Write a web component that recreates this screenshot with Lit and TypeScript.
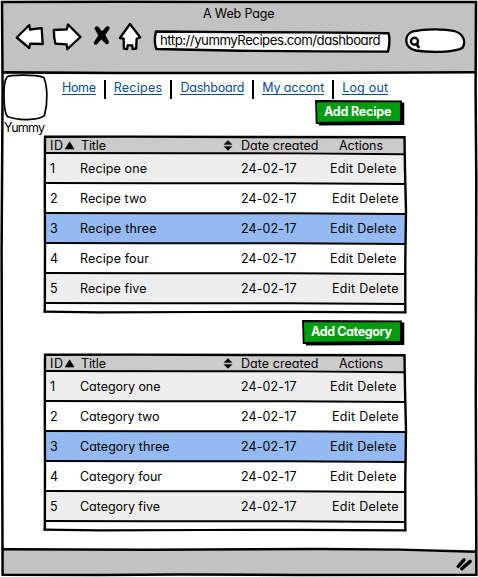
import { LitElement, html, svg, css } from "lit";
import { customElement, property } from "lit/decorators.js";
import { classMap } from "lit/directives/class-map.js";

/** A label whose tracking is computed so that it fills a given width. */
@customElement("sk-text")
class SkText extends LitElement {
  @property() text = "";
  @property({ type: Number }) width = 0;
  static styles = css`
    :host { display: block; white-space: pre; flex: none; }
    .t { display: inline-block; font-feature-settings: "cv11" 1, "calt" 0; }
  `;
  render() {
    return html`<span class="t">${this.text}</span>`;
  }
  updated() {
    const el = this.renderRoot.querySelector<HTMLElement>(".t")!;
    el.style.letterSpacing = "0px";
    const natural = el.getBoundingClientRect().width;
    const n = Math.max(1, this.text.length - 1);
    el.style.letterSpacing = `${((this.width - natural) / n).toFixed(3)}px`;
  }
}

const label = (text: string, width: number) =>
  html`<sk-text .text=${text} .width=${width}></sk-text>`;

interface Row { title: string; width: number; indent: boolean }

@customElement("sk-table")
class SkTable extends LitElement {
  @property({ attribute: false }) rows: Row[] = [];
  static styles = css`
    :host { display: block; position: relative; width: 363px; height: 178px; }
    .body { display: flex; flex-direction: column; padding: 1px 2px 0 1px; }
    .row { display: grid; grid-template-columns: 30px 160px 90px 80px; height: 28px; padding-top: 2px; align-items: center; }
    .head { height: 15px; padding-top: 1px; background: #cbcbcb; }
    .odd { background: #eee; }
    .selected { background: #94baf1; }
    .id { padding-left: 5px; display: flex; align-items: center; }
    .id svg { margin-left: 0; }
    .title { padding-left: 5px; display: flex; align-items: center; }
    .head .title { padding-right: 2px; padding-left: 6px; justify-content: space-between; }
    .date { padding-left: 6px; }
    .act { padding-left: 5px; }
    .act.in { padding-left: 7px; }
    .head .act { padding-left: 14px; }
    .lines { position: absolute; left: -2px; top: -2px; }
  `;
  render() {
    return html`
      <div class="body">
        <div class="row head">
          <div class="id">${label("ID", 13)}
            <svg width="12" height="10" viewBox="0 0 12 10"><path d="M6 .6L10.6 8.2H1.2Z" fill="#000" stroke="#000" stroke-width=".6"/></svg>
          </div>
          <div class="title">${label("Title", 25)}
            <svg width="10" height="12" viewBox="0 0 10 12"><path d="M5 .4L9 4.4H1ZM5 10.4L9 6.4H1Z" fill="#000" stroke="#000" stroke-width=".4"/></svg>
          </div>
          <div class="date">${label("Date created", 77.5)}</div>
          <div class="act">${label("Actions", 44)}</div>
        </div>
        ${this.rows.map((r, i) => html`
          <div class=${classMap({ row: true, odd: i % 2 === 0, selected: i === 2 })}>
            <div class="id">${label(String(i + 1), 8)}</div>
            <div class="title">${label(r.title, r.width)}</div>
            <div class="date">${label("24-02-17", 55.5)}</div>
            <div class=${classMap({ act: true, in: r.indent })}>${label("Edit Delete", 66.5)}</div>
          </div>`)}
      </div>
      <svg class="lines" width="368" height="182" viewBox="42 134 368 182" fill="none" stroke="#000">
        <path stroke-width="2.4" d="M44 136.8L130 136.6L250 137L404.5 137.3L405 170L406 212L405.3 260L405.3 312.5M45 136L44.8 190L45 250L44.8 312.5"/>
        <path stroke-width="2.2" d="M43.5 311.7L100 312.4L200 312L300 311.8L406.5 312.4"/>
        <path stroke-width="1.9" d="M45 153L200 153.2L300 153.4L405 154.2"/>
        ${[183, 213, 243, 273, 303].map((y) => svg`<path stroke-width="2" d="M45 ${y}L150 ${y + 0.2}L290 ${y + 0.2}L405 ${y + 1}"/>`)}
      </svg>`;
  }
}

@customElement("app-root")
class AppRoot extends LitElement {
  static styles = css`
    :host { display: block; position: relative; width: 478px; height: 577px; background: #fff; overflow: hidden;
      font: 400 12.5px/16px Inter, "Liberation Sans", sans-serif; color: #000; }
    *, sk-table { box-sizing: border-box; }
    .bar { height: 73px; background: #c2c2c2; display: flex; flex-direction: column; }
    .name { padding: 6px 0 0 203px; height: 20px; }
    .tools { display: grid; grid-template-columns: 34px 38px 32px 30px 252px 78px; padding-left: 14px; height: 40px; }
    .url { position: relative; padding: 12px 0 0 12px; font-size: 13.2px; }
    .url svg { position: absolute; left: 0; top: 0; }
    .url sk-text { position: relative; }
    .page { height: 477px; display: grid; grid-template-columns: 44px 434px; }
    .brand { padding-top: 1px; display: flex; flex-direction: column; }
    .brand svg { margin-bottom: -1px; flex: none; }
    .brand sk-text { padding-left: 4px; }
    .main { display: flex; flex-direction: column; }
    nav { display: flex; height: 27px; padding: 7px 0 0 18px; color: #0a4d92; }
    nav .link { height: 15px; border-bottom: 1px solid #0a4d92; }
    nav i { width: 2px; height: 19px; background: #000; margin: 0 8px 0 8px; flex: none; }
    .btn { position: relative; height: 26px; padding-top: 4px; color: #fff; font-weight: 650; }
    .btn svg { position: absolute; left: 0; top: 0; }
    .btn sk-text { position: relative; }
    .recipe { width: 90px; margin-left: 271px; padding-left: 9px; }
    .category { width: 104px; margin-left: 258px; padding-left: 9px; margin-top: 6px; }
    .first { margin-top: 10px; }
    .second { margin-top: 8px; }
    .status { height: 27px; background: #c2c2c2; }
    .frame { position: absolute; left: 0; top: 0; }
  `;
  private glyph(x: number, w: number, body: unknown) {
    return html`<svg width=${w} height="40" viewBox="${x} 20 ${w} 40" fill="#fff" stroke="#000" stroke-width="2.3" stroke-linejoin="round" stroke-linecap="round">${body}</svg>`;
  }
  private button(cls: string, w: number, text: string, tw: number) {
    return html`<div class="btn ${cls}">
      <svg width=${w + 5} height="27" viewBox="0 0 ${w + 5} 27">
        <path fill="#000" d="M4 4L${w + 3.3} 2.5L${w + 3.3} 25L4 25.6Z"/>
        <path fill="#009b0e" stroke="#000" stroke-width="1.8" d="M1 1L${w} 1.3L${w} 21.6L1.6 23Z"/>
      </svg>${label(text, tw)}</div>`;
  }
  private nav() {
    const items: [string, number][] = [["Home", 34], ["Recipes", 48.5], ["Dashboard", 64], ["My accont", 62], ["Log out", 46]];
    return items.map(([t, w], i) => html`${i ? html`<i></i>` : ""}<div class="link">${label(t, w)}</div>`);
  }
  private rows(kind: string, widths: number[]): Row[] {
    return ["one", "two", "three", "four", "five"].map((n, i) => ({
      title: `${kind} ${n}`, width: widths[i], indent: i === 1 || i === 4,
    }));
  }
  render() {
    return html`
      <div class="bar">
        <div class="name">${label("A Web Page", 71.5)}</div>
        <div class="tools">
          ${this.glyph(14, 34, svg`<path d="M16.8 37.5L29.3 25L30 29.5L41.7 28.2L42.7 44L30.3 43.6L29.2 48Z"/>`)}
          ${this.glyph(48, 38, svg`<path d="M53.8 30L66.8 29.3L68 24.5L80.5 37L67.3 49.2L66.6 44.3L55.5 43.7L54.3 38Z"/>`)}
          ${this.glyph(86, 32, svg`<path stroke="none" fill="#000" d="M94.3 28.3Q95.5 25.6 98.2 26.6L102 31.2L106.4 26.4Q109.4 25.4 109.8 28.3L105.4 35L109 41.8Q109 45 106 44L101.4 39.6L97 44.3Q94 46 93.6 42.4L98.2 35.6Z"/>`)}
          ${this.glyph(118, 30, svg`<path d="M130 24L140.2 37.4L136.6 38.8L136.2 48.5L132.5 49L132.3 45.3L127.6 45.3L127.2 49L123.8 48.6L123.7 38.6L119.9 38Z"/>`)}
          <div class="url">
            ${this.glyph(148, 252, svg`<path stroke-width="2.4" d="M156 31.5L230 32.1L310 32.4L388.6 33.2Q390.5 41 388 51.6L320 51.4L240 50.8L156.3 49Q153.5 41 156 31.5Z"/>`)}
            ${label("http://yummyRecipes.com/dashboard", 220.5)}
          </div>
          ${this.glyph(400, 78, svg`<path stroke-width="2.3" d="M413 31.3C425 29 443 28.6 454 31C464 33.5 466 42 462.5 47.8C455 52.8 428 52.6 416 50.5C403.5 48 403.5 34.5 413 31.3Z"/><circle cx="414.5" cy="41.3" r="3.5" stroke-width="2.4"/><path stroke-width="2.8" d="M416.8 44.2L418.5 47"/>`)}
        </div>
      </div>
      <div class="page">
        <div class="brand">
          <svg width="50" height="47" viewBox="0 73 50 47" fill="none" stroke="#000" stroke-width="1.7"><path d="M6.8 76.2C9 73.6 35 73.4 43.8 76.5C47.4 85 48.2 101 44.4 114.7C38 119.6 18 119.8 7.3 115.5C3.3 110 2.6 82 6.8 76.2Z"/></svg>
          ${label("Yummy", 41)}
        </div>
        <div class="main">
          <nav>${this.nav()}</nav>
          ${this.button("recipe", 86, "Add Recipe", 67.5)}
          <sk-table class="first" .rows=${this.rows("Recipe", [67, 66.5, 76.5, 69, 66.5])}></sk-table>
          ${this.button("category", 99, "Add Category", 81)}
          <sk-table class="second" .rows=${this.rows("Category", [80.5, 79.5, 89.5, 82, 80])}></sk-table>
        </div>
      </div>
      <div class="status"></div>
      <svg class="frame" width="478" height="577" viewBox="0 0 478 577" fill="none" stroke="#000">
        <path fill="#fff" stroke="none" d="M0 0H478V577H0ZM2 2V574.5H476V2Z" fill-rule="evenodd"/>
        <path stroke-width="2.5" d="M2 2L120 1.8L300 2L476 2L475.6 90L476.3 180L475.8 400L476.4 574.8L300 575L180 574.4L100 575L2.6 574.8L2 400L1.6 250L2.6 90Z"/>
        <path stroke-width="2.6" d="M2 72.4L120 73L300 73L476 72.2"/>
        <path stroke-width="2.4" d="M2 549.3L150 549.8L320 549L400 549.6L476 551.8"/>
        <path stroke-width="3.4" stroke-linecap="round" d="M458.2 566.4L464 559.8M461.8 568.6L470.2 561.4"/>
      </svg>`;
  }
}
